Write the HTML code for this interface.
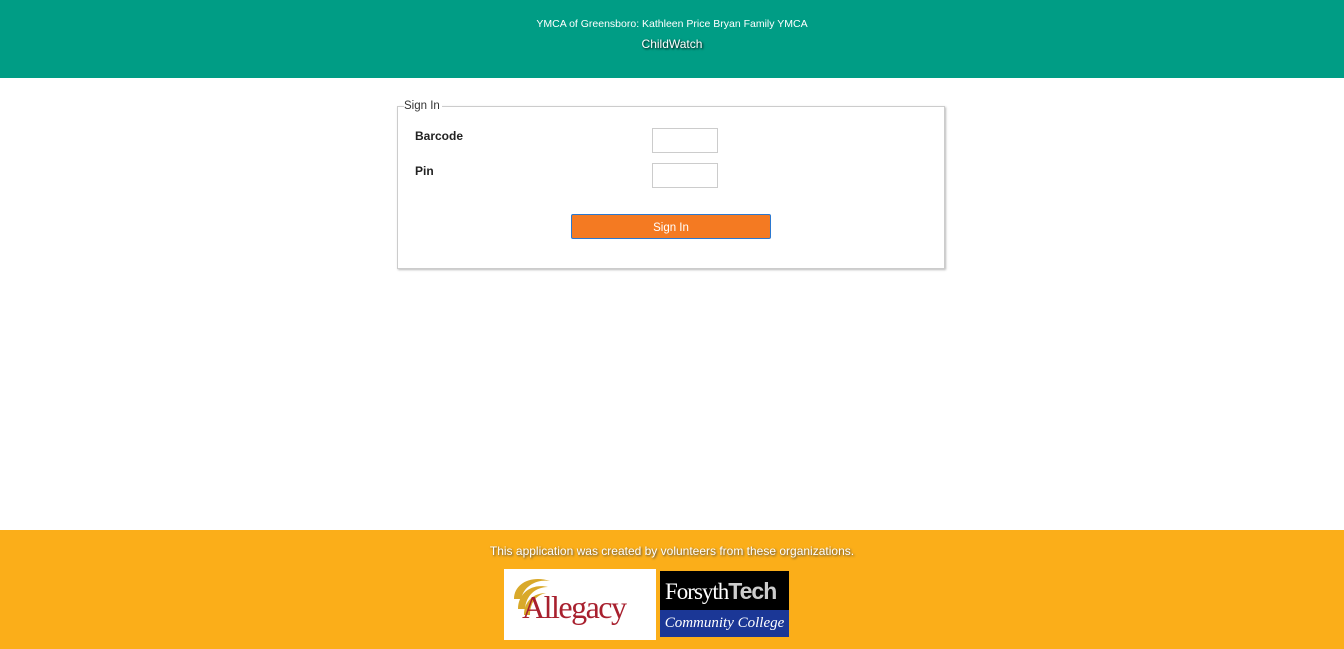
<!DOCTYPE html>
<html><head><meta charset="utf-8"><style>
body{margin:0;width:1344px;height:649px;position:relative;font-family:"Liberation Sans",sans-serif;background:#fff;overflow:hidden}
.hdr{position:absolute;left:0;top:0;width:1344px;height:78px;background:#009d85;color:#fff;text-align:center;font-size:10.5px}
.t1{position:absolute;top:18px;width:100%}
.t2{position:absolute;top:37px;width:100%;font-size:12px;text-shadow:1px 1px 2px #000}
.box{position:absolute;left:397px;top:106px;width:546px;height:161px;border:1px solid #ccc;box-shadow:1px 1px 2px #bbb}
.leg{position:absolute;left:404px;top:100px;background:#fff;font-size:11.5px;color:#333;padding:0 2px 0 0}
.lbl{position:absolute;left:415px;font-size:12px;font-weight:bold;color:#222}
.inp{position:absolute;left:652px;width:64px;height:23px;border:1px solid #ccc}
.btn{position:absolute;left:571px;top:214px;width:198px;height:23px;background:#f47a22;border:1px solid #2b78d0;border-radius:2px;color:#fff;font-size:11.5px;text-align:center;line-height:26px}
.ftr{position:absolute;left:0;top:530px;width:1344px;height:119px;background:#fbae19}
.ft{position:absolute;top:14px;width:100%;text-align:center;color:#fff;font-size:12px;text-shadow:1px 1px 2px #444}
</style></head><body>
<div class="hdr"><div class="t1">YMCA of Greensboro: Kathleen Price Bryan Family YMCA</div><div class="t2">ChildWatch</div></div>
<div class="box"></div>
<div class="leg">Sign In</div>
<div class="lbl" style="top:129px">Barcode</div>
<div class="lbl" style="top:164px">Pin</div>
<div class="inp" style="top:128px"></div>
<div class="inp" style="top:163px"></div>
<div class="btn">Sign In</div>
<div class="ftr">
<div class="ft">This application was created by volunteers from these organizations.</div>
<div style="position:absolute;left:504px;top:39px;width:152px;height:71px;background:#fff">
<svg width="152" height="71" style="position:absolute;left:0;top:0"><path d="M10 30 C10 14 28 6 46 12 C34 10 20 16 17 30 Z" fill="#d9a92a"/><path d="M14 40 C14 24 28 14 44 18 C32 18 22 26 21 40 Z" fill="#d9a92a"/><path d="M20 46 C20 32 30 24 42 24 C32 26 26 34 26 46 Z" fill="#d9a92a"/></svg>
<div style="position:absolute;left:18px;top:20px;font-family:'Liberation Serif',serif;font-size:32px;color:#a8202e;letter-spacing:-1.5px">Allegacy</div></div>
<div style="position:absolute;left:660px;top:41px;width:129px;height:39px;background:#000;color:#fff;font-family:'Liberation Serif',serif;font-size:23px;line-height:40px;padding-left:5px;box-sizing:border-box;letter-spacing:-1px">Forsyth<b style="font-family:'Liberation Sans',sans-serif;color:#ccc">Tech</b></div>
<div style="position:absolute;left:660px;top:80px;width:129px;height:27px;background:#1b3796;color:#fff;font-family:'Liberation Serif',serif;font-style:italic;font-size:15px;line-height:27px;text-align:center">Community College</div>
</div>
</body></html>
